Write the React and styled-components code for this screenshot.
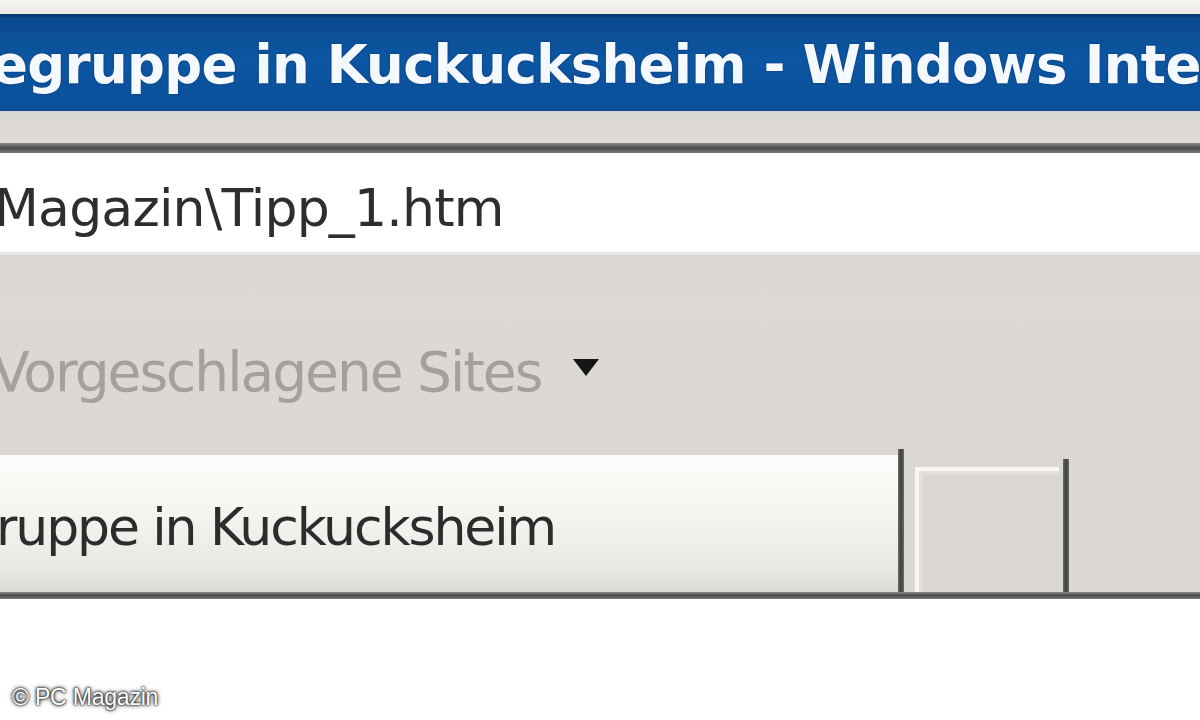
import styled, { createGlobalStyle } from "styled-components";

const Global = createGlobalStyle`
    html, body {
        margin: 0;
        padding: 0;
        background: #ffffff;
    }
    body {
        width: 1200px;
        height: 720px;
        overflow: hidden;
    }
`

const Window = styled.div`
    position: relative;
    width: 1200px;
    height: 720px;
    display: flex;
    flex-direction: column;
    overflow: hidden;
    background: #ffffff;
`
const TopStrip = styled.div`
    height: 14px;
    background: linear-gradient(#f7f6f2, #ebe9e4);
`
const TitleBar = styled.div`
    height: 97px;
    box-sizing: border-box;
    border-top: 3px solid #0a3b72;
    background: linear-gradient(#0b4a8e, #0c56a3 45%, #0b4f98);
    display: flex;
    align-items: flex-end;
    padding-bottom: 20px;
    overflow: hidden;
    h1 {
        margin: 0 0 0 -8px;
        font-family: "DejaVu Sans", Verdana, sans-serif;
        font-weight: bold;
        font-size: 53px;
        line-height: 1;
        letter-spacing: -0.7px;
        color: #f4f8ff;
        white-space: nowrap;
        text-shadow: 0 0 2px rgba(0, 20, 60, 0.6);
    }
`
const MenuStrip = styled.div`
    height: 32px;
    background: linear-gradient(#d8d6d2, #e0ddd8);
`
const Divider = styled.div`
    height: ${(p) => p.h}px;
    background: linear-gradient(#8a8a8a, #4c4c4c 50%, #7a7a7a);
`
const Address = styled.div`
    height: 102px;
    box-sizing: border-box;
    background: #ffffff;
    border-bottom: 3px solid #e9e7e3;
    display: flex;
    align-items: center;
    padding-top: 10px;
    span {
        margin-left: -6px;
        font-family: "DejaVu Sans", Verdana, sans-serif;
        font-size: 52px;
        letter-spacing: -0.8px;
        color: #2e2e2e;
        white-space: nowrap;
    }
`
const Favorites = styled.div`
    height: 197px;
    background: linear-gradient(#d9d6d1, #dcd9d4 20%, #dbd8d3);
    display: flex;
    align-items: center;
    gap: 32px;
    padding-top: 36px;
    box-sizing: border-box;
    span {
        margin-left: -8px;
        font-family: "DejaVu Sans", Verdana, sans-serif;
        font-size: 55px;
        letter-spacing: -2px;
        color: #a3a1a0;
        white-space: nowrap;
    }
`
const Caret = styled.div`
    width: 0;
    height: 0;
    margin-top: -8px;
    border-left: 13px solid transparent;
    border-right: 13px solid transparent;
    border-top: 17px solid #151515;
`
const TabRow = styled.div`
    height: 140px;
    background: #dbd8d3;
    display: flex;
    align-items: flex-end;
`
const Tab = styled.div`
    width: 898px;
    height: 137px;
    box-sizing: border-box;
    background: linear-gradient(#fdfcfa, #f7f6f3 35%, #e9e7e3 85%, #dcdad6);
    display: flex;
    align-items: center;
    span {
        margin-left: -4px;
        margin-top: 6px;
        font-family: "DejaVu Sans", Verdana, sans-serif;
        font-size: 52px;
        letter-spacing: -2.1px;
        color: #2c2c2c;
        white-space: nowrap;
    }
`
const Separator = styled.div`
    width: 6px;
    height: ${(p) => p.h}px;
    background: linear-gradient(90deg, #6c6c6c, #3e3e3e, #6c6c6c);
`
const NewTab = styled.div`
    width: 144px;
    height: 125px;
    margin: 0 4px 0 11px;
    box-sizing: border-box;
    border-top: 4px solid #f8f7f5;
    border-left: 4px solid #f8f7f5;
    background: #dad7d2;
    box-shadow: inset 8px 8px 0 -4px #e2e0dc;
`
const Bottom = styled.div`
    flex: 1;
    background: #ffffff;
`
const Copyright = styled.div`
    position: absolute;
    left: 12px;
    bottom: 9px;
    font-family: "Liberation Sans", Arial, sans-serif;
    font-size: 23px;
    letter-spacing: -0.2px;
    color: #ffffff;
    text-shadow: 0 0 2px #111, 0 0 3px #222, 0 0 5px #444;
`

const App = () => {
    return (
        <Window>
            <Global />
            <TopStrip />
            <TitleBar>
                <h1>egruppe in Kuckucksheim - Windows Internet Explorer</h1>
            </TitleBar>
            <MenuStrip />
            <Divider h={10} />
            <Address>
                <span>Magazin\Tipp_1.htm</span>
            </Address>
            <Favorites>
                <span>Vorgeschlagene Sites</span>
                <Caret />
            </Favorites>
            <TabRow>
                <Tab>
                    <span>ruppe in Kuckucksheim</span>
                </Tab>
                <Separator h={143} />
                <NewTab />
                <Separator h={133} />
            </TabRow>
            <Divider h={7} />
            <Bottom />
            <Copyright>© PC Magazin</Copyright>
        </Window>
    )
}

export default App;
